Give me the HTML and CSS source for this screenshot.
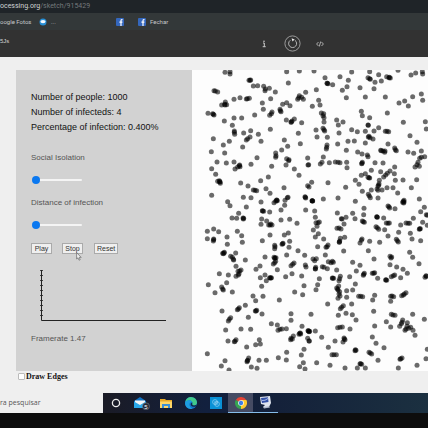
FILE: index.html
```html
<!DOCTYPE html>
<html lang="en">
<head>
<meta charset="utf-8">
<title>Infection sketch</title>
<link rel="stylesheet" href="styles.css">
</head>
<body>
<div class="address"><span class="host">ocessing.org</span>/sketch/915429</div>
<nav class="bookmarks">
  <a class="photos" href="#">oogle Fotos</a>
  <a class="dots" href="#"><svg width="8" height="8" viewBox="0 0 8 8"><circle cx="4" cy="4" r="3.5" fill="#2790d8"/><ellipse cx="4" cy="3.6" rx="2.6" ry="1.6" fill="#f4faff"/></svg>...</a>
  <a class="fb" href="#" aria-label="Facebook"><svg width="8" height="8" viewBox="0 0 8 8"><rect width="8" height="8" rx="1" fill="#3467bd"/><path d="M6.5 1.7H5.8Q5 1.7 5 2.6V8M3.4 4.2H6.4" fill="none" stroke="#fff" stroke-width="1.2"/></svg></a>
  <a class="fechar" href="#"><svg width="8" height="8" viewBox="0 0 8 8"><rect width="8" height="8" rx="1" fill="#3467bd"/><path d="M6.5 1.7H5.8Q5 1.7 5 2.6V8M3.4 4.2H6.4" fill="none" stroke="#fff" stroke-width="1.2"/></svg>Fechar</a>
</nav>
<header class="toolbar">
  <span class="brand">5Js</span>
  <div class="tools">
    <button aria-label="Info"><svg width="6" height="8" viewBox="0 0 6 8"><path d="M2 3H3.3V6.5M1.7 6.7H4.7" fill="none" stroke="#ccc" stroke-width="1"/><circle cx="3" cy="1.2" r=".8" fill="#ccc"/></svg></button>
    <button aria-label="Restart"><svg width="17" height="17" viewBox="0 0 17 17" fill="none" stroke="#b5b5b5"><circle cx="8.5" cy="8.5" r="7.6" stroke-width=".8"/><path d="M6.3 5.3A4 4 0 1 0 10.8 5.2" stroke-width="1"/><path d="M7.6 3.2 10.6 4.6 8.5 6.6Z" fill="#eee" stroke="none"/></svg></button>
    <button aria-label="Code"><svg width="8" height="6" viewBox="0 0 8 6" fill="none" stroke="#bbb" stroke-width=".9"><path d="M2.5 1 .6 3 2.5 5M5.5 1 7.4 3 5.5 5M4.7 .5 3.3 5.5"/></svg></button>
  </div>
</header>
<main class="page">
  <div class="sketch">
    <section class="panel">
      <p class="stat">Number of people: 1000</p>
      <p class="stat">Number of infecteds: 4</p>
      <p class="stat">Percentage of infection: 0.400%</p>
      <label class="caption social" for="social">Social Isolation</label>
      <input id="social" type="range" min="0" max="100" value="0">
      <label class="caption distance" for="distance">Distance of infection</label>
      <input id="distance" type="range" min="0" max="100" value="0">
      <div class="actions">
        <button>Play</button>
        <span class="stop"><button>Stop</button><svg class="cursor" width="6" height="9" viewBox="0 0 6 9"><path d="M.6 .6V7L2 5.8 3 8.2 4.2 7.7 3.2 5.4H5.2Z" fill="#eee" stroke="#555" stroke-width=".6"/></svg></span>
        <button>Reset</button>
      </div>
      <svg class="chart" width="128" height="53" viewBox="0 0 128 53" fill="none" stroke="#222"><path d="M2.5 1V51.5H127"/><path d="M1 1.5H4M1 6.5H4M1 11.5H4M1 16.5H4M1 21.5H4M1 26.5H4M1 31.5H4M1 36.5H4M1 41.5H4M1 46.5H4" stroke-width=".8"/></svg>
      <p class="caption rate">Framerate 1.47</p>
    </section>
    <svg class="crowd" id="crowd" viewBox="0 0 708 903" preserveAspectRatio="xMinYMin slice"></svg>
  </div>
  <label class="edges"><input type="checkbox">Draw Edges</label>
</main>
<footer class="taskbar">
  <div class="search">ra pesquisar</div>
  <button class="app" aria-label="Cortana"><svg width="10" height="10" viewBox="0 0 10 10"><circle cx="5" cy="5" r="3.6" fill="none" stroke="#eee" stroke-width="1.3"/></svg></button>
  <button class="app" aria-label="Mail"><svg width="18" height="14" viewBox="0 0 18 14"><path d="M2 5 8 1 14 5V12H2Z" fill="#1273c4"/><path d="M3 4.5H13V8L8 10 3 8Z" fill="#f2f4f6"/><path d="M2 5.5 8 9 14 5.5V12H2Z" fill="#28a8ea"/><circle cx="14" cy="10.3" r="3.5" fill="#222936" stroke="#8b929b" stroke-width=".5"/><text x="14" y="12.5" class="count">5</text></svg></button>
  <button class="app" aria-label="Files"><svg width="12" height="11" viewBox="0 0 12 11"><path d="M0 1H5L6 2H12V10H0Z" fill="#e9a927"/><path d="M0 3.5H12V10H0Z" fill="#ffd767"/><path d="M2 10V6H10V10H8V8H4V10Z" fill="#3d91d6"/></svg></button>
  <button class="app" aria-label="Edge"><svg width="12" height="12" viewBox="0 0 12 12"><circle cx="6" cy="6" r="6" fill="#1272c8"/><path d="M.2 5.2C1 1.6 3.3 0 6 0 9.6 0 12 2.8 12 5.4 12 7.5 10.5 8.5 8.8 8.5 7 8.5 7 7.5 7.4 6.8 8 5 5.8 3 3.6 3.4 2 3.6.8 4.4.2 5.2Z" fill="#42c98c"/><path d="M.2 5.2C2 2.5 6 3 7 5 5 4.8 4 6.5 4.6 8.5 5 10 6.2 11.2 7.5 11.8 3 12.8-.6 9.4.2 5.2Z" fill="#1e9de0"/><path d="M7.3 5.5Q6.5 8.4 9 8.6 10.5 8.6 11.6 7.6L11 9.2Q8 10.5 6 8.5 5 6.5 7.3 5.5Z" fill="#102945"/></svg></button>
  <button class="app" aria-label="Remote"><svg width="12" height="12" viewBox="0 0 12 12"><rect width="12" height="12" fill="#0a91d6"/><g fill="none" stroke="#a8dcf6" stroke-width=".6"><circle cx="5" cy="5" r="2.4"/><circle cx="7" cy="7" r="2.4"/><path d="M4 5H8M5 7H8"/></g></svg></button>
  <button class="app active" aria-label="Chrome"><svg width="12" height="12" viewBox="0 0 12 12"><path d="M6 6 .8 3A6 6 0 0 1 11.2 3Z" fill="#e54435"/><path d="M6 6 11.2 3A6 6 0 0 1 6 12Z" fill="#fdc92e"/><path d="M6 6V12A6 6 0 0 1 .8 3Z" fill="#35a452"/><path d="M6 3H11.2L12 6 8.6 7.5Z" fill="#fdc92e"/><circle cx="6" cy="6" r="2.8" fill="#fff"/><circle cx="6" cy="6" r="2.2" fill="#3d7ee6"/></svg></button>
  <button class="app open" aria-label="Computer"><svg width="13" height="13" viewBox="0 0 13 13"><path d="M1 1 11 0 12 7 10 11H4L6 9 2 8Z" fill="#dfe5ef"/><path d="M2 2 9 1.3 9.5 6 3 7Z" fill="#3452a8"/><path d="M3 4.5Q6 5 9 2.5" stroke="#a9bbec" fill="none"/><path d="M4 11 10 10.2 11 11.5 5 12.5Z" fill="#b0bacb"/></svg></button>
</footer>
<script src="crowd.js"></script>
</body>
</html>
```
FILE: styles.css
```css
* { box-sizing: border-box; }
body {
  margin: 0;
  min-height: 100vh;
  background: #0d0d0d;
  font-family: "Liberation Sans", Arial, sans-serif;
  overflow: hidden;
}
p { margin: 0; }
svg { display: block; flex: none; }
a { color: inherit; text-decoration: none; }
button { font-family: inherit; }

.address {
  height: 13px;
  line-height: 13px;
  background: #1f2428;
  color: #74797b;
  font-family: Roboto, sans-serif;
  font-size: 7px;
}
.host { color: #d0d3d4; }

.bookmarks {
  display: flex;
  height: 17px;
  line-height: 17px;
  background: #333839;
  color: #c5c8c9;
  font-family: Roboto, sans-serif;
  font-size: 6px;
}
.bookmarks a { display: flex; align-items: center; gap: 4px; }
.photos { width: 39px; }
.dots { width: 77px; }
.fb { width: 22px; }

.toolbar {
  display: flex;
  justify-content: space-between;
  align-items: center;
  height: 27px;
  background: #323232;
  color: #d0d0d0;
}
.brand { font-size: 6px; line-height: 22px; align-self: flex-start; }
.tools { display: flex; margin-right: 94px; }
.tools button {
  display: flex;
  justify-content: center;
  align-items: center;
  width: 28px;
  height: 20px;
  padding: 0;
  border: 0;
  background: none;
}

.page { height: 336px; padding: 13px 0 0 16px; background: #efefef; }
.sketch { display: flex; height: 301px; }
.panel {
  flex: none;
  display: flex;
  flex-direction: column;
  align-items: flex-start;
  width: 176px;
  padding: 20px 0 0 15px;
  background: #d2d2d2;
}
.stat { font-size: 9px; line-height: 15px; color: #111; }
.caption { font-size: 8px; line-height: 15px; color: #555; }
.social { margin-top: 15px; }
.distance { margin-top: 10px; }
.rate { margin-top: 9px; }

input[type="range"] {
  appearance: none;
  width: 50px;
  height: 10px;
  margin: 10px 0 0 1px;
  background: none;
}
input[type="range"]::-webkit-slider-runnable-track {
  height: 2px;
  border-radius: 1px;
  background: #f4f4f4;
}
input[type="range"]::-webkit-slider-thumb {
  appearance: none;
  width: 8px;
  height: 8px;
  margin-top: -3px;
  border-radius: 50%;
  background: #0a78f0;
}

.actions { display: flex; gap: 10px; margin-top: 13px; }
.actions button {
  display: block;
  height: 11px;
  min-width: 21px;
  padding: 0 2px;
  border: 1px solid #aaa;
  background: #efefef;
  color: #333;
  font-size: 7px;
  line-height: 9px;
}
.stop { position: relative; margin-right: 1px; }
.cursor { position: absolute; left: 14px; top: 9px; }
.chart { margin: 15px 0 0 8px; }

.crowd { flex: 1; min-width: 0; height: 301px; background: #fdfdfd; }
.crowd circle { fill: #000; fill-opacity: .58; }

.edges {
  display: flex;
  align-items: center;
  gap: 1px;
  height: 12px;
  padding-left: 2px;
  color: #111;
  font: bold 8px/12px "Liberation Serif", serif;
}
.edges input {
  appearance: none;
  width: 7px;
  height: 7px;
  margin: 0 0 2px;
  border: 1px solid #bbb;
  border-radius: 1px;
  background: #fff;
}

.taskbar {
  display: flex;
  height: 20px;
  background: linear-gradient(90deg, #1a1b26 25%, #12203e 48%, #14213a 65%, #1b3040);
}
.search {
  width: 103px;
  background: #efefef;
  color: #555;
  font: 7px/20px "Open Sans", sans-serif;
}
.app {
  display: flex;
  align-items: center;
  justify-content: center;
  width: 25px;
  padding: 0;
  border: 0;
  background: none;
}
.active { background: #454b63; border-bottom: 1px solid #86bdea; }
.open { border-bottom: 1px solid #86bdea; }
.count { font: 6px "Liberation Sans", sans-serif; fill: #fff; text-anchor: middle; }
```
FILE: crowd.js
```js
// People are grouped by tile: origin of the tile, then "x,y" pairs inside it.
const tiles = [
  [-6, -31, `105,38 120,36 120,43 290,36 328,34 295,70 177,62 182,61 180,62 72,93 76,94 83,97 190,79 203,78 221,80 238,86 225,93 226,88 256,97 347,98 242,117 132,119 150,114 169,118 172,117 178,116 106,127 95,136 104,134 110,135 105,136 217,130 328,108 326,114 323,119 340,119 335,113 278,134 290,129 300,138 220,149 246,157 239,167 244,162 270,149 273,156 271,153 54,161 68,162 72,166 70,164 194,166 132,175 155,175 103,184 127,197 289,181 313,178 303,188 304,187 306,184 335,189 241,209 133,214 134,224 133,218 161,220 182,213 205,224 180,232 169,241 173,237 213,245 70,237 118,245 100,256 158,262 325,221 283,241 331,252 293,260 275,271 64,276 104,280 257,280 258,288 257,293 201,294 290,297 297,300 353,295`],
  [348, -31, `18,34 131,37 185,36 212,45 270,32 309,46 323,40 343,36 344,43 51,54 96,51 121,62 180,54 185,57 187,59 220,64 201,68 236,51 243,54 247,55 244,53 58,71 60,72 57,71 74,75 117,81 103,92 198,87 156,84 25,90 115,114 172,112 232,112 314,111 340,103 344,122 290,124 273,130 301,139 32,122 36,136 13,140 40,160 47,162 48,174 48,187 45,168 160,155 163,168 185,174 238,160 180,196 181,197 86,181 105,187 91,196 286,188 352,186 355,208 24,211 45,206 50,214 48,210 93,220 131,210 148,216 172,215 198,214 212,204 232,215 242,216 237,215 27,232 58,233 181,232 186,234 195,238 183,230 306,228 327,248 120,245 139,244 172,250 240,253 89,253 57,256 55,268 56,263 115,272 149,277 162,283 178,286 180,291 218,272 225,274 230,278 220,273 231,274 260,265 265,273 262,270 300,277 317,281 340,274 46,292 340,293 350,291 335,296`],
  [-6, 269, `81,7 109,10 132,7 183,14 245,20 288,16 296,3 149,16 143,22 135,28 148,18 150,21 65,27 77,44 313,28 327,47 354,16 235,52 212,63 88,63 83,65 91,71 90,66 89,67 152,70 174,79 190,91 200,93 195,92 228,87 240,101 282,84 353,78 65,107 160,113 183,114 213,127 260,121 252,129 262,123 257,125 260,122 285,122 294,113 292,114 284,137 345,111 347,115 346,113 113,126 120,138 169,142 218,154 221,155 217,153 239,157 273,151 347,151 146,161 126,175 140,176 159,175 160,178 161,176 215,178 230,184 213,194 236,196 240,196 246,196 242,193 273,181 299,179 321,191 52,215 71,208 86,216 52,237 71,238 70,244 71,240 142,215 155,228 111,232 112,254 157,248 240,226 295,220 283,226 217,243 299,245 278,252 276,254 279,251 254,257 254,267 255,261 297,263 98,281 102,280 103,278 100,282 137,280 122,290 127,293 130,299 225,292 252,293 255,295 258,294 254,296 290,286 324,273 344,287`],
  [348, 269, `2,15 37,13 42,8 64,9 82,7 96,9 90,8 116,8 117,24 161,12 163,8 162,11 201,9 225,10 260,22 330,8 334,20 321,22 327,15 190,32 218,36 246,34 238,41 233,46 259,42 227,52 172,42 160,47 180,53 185,55 183,54 142,62 153,74 11,68 3,82 60,69 113,83 214,62 213,72 210,79 212,77 262,62 285,61 326,60 237,84 255,84 310,84 190,91 163,95 207,88 222,91 210,92 181,104 187,114 184,109 210,115 269,100 13,123 14,124 12,123 13,124 46,118 90,115 142,125 334,118 286,125 288,127 287,130 284,128 288,122 240,139 243,141 245,145 261,147 349,143 168,146 338,156 355,165 358,167 20,154 22,173 34,187 24,189 30,189 27,200 16,211 31,222 22,232 88,160 134,161 167,165 114,173 102,178 100,177 141,177 108,193 163,184 169,188 166,186 207,172 208,173 206,171 227,175 235,190 244,190 240,191 278,196 294,190 305,191 300,191 316,176 344,188 337,207 334,209 335,207 358,197 87,206 99,208 93,205 204,201 208,204 212,209 230,210 272,218 307,221 240,229 47,238 97,236 110,233 94,247 95,244 94,248 162,238 156,250 160,242 185,245 215,248 265,239 271,247 268,243 312,238 338,243 29,261 54,263 60,256 57,261 107,274 181,273 52,286 305,278 314,293 246,290 251,292 249,295 15,298 25,297 198,298`],
  [-6, 569, `131,1 166,1 138,20 153,31 144,35 147,42 138,50 149,34 145,46 88,42 115,46 110,69 95,82 98,88 100,91 127,97 55,75 75,99 210,19 198,29 250,13 257,5 254,9 262,30 312,10 303,18 308,14 346,16 348,22 306,42 287,51 335,49 211,54 225,46 229,63 239,54 243,55 240,55 244,54 215,80 342,78 314,97 338,105 189,109 219,110 197,123 268,121 96,154 166,137 148,144 142,150 145,148 196,154 200,152 198,154 216,163 175,173 122,174 115,184 118,179 303,162 303,182 107,211 153,208 182,209 244,192 262,196 264,212 276,208 289,207 270,209 336,200 329,221 332,223 327,224 331,220 354,213 357,215 310,229 303,236 302,240 307,238 353,236 357,244 114,244 138,240 135,245 133,246 208,240 211,253 197,255 170,262 52,282 342,269 290,278 334,286 265,294 289,301 105,303 94,319 117,331 176,295 173,302 171,306 172,303 207,302 229,302 184,322 201,326 340,309 329,321 345,328`],
  [348, 569, `20,3 22,28 23,23 22,27 43,21 58,27 48,23 61,6 69,9 76,8 73,5 134,8 156,17 86,31 145,34 97,50 93,63 95,57 125,51 166,47 169,41 167,44 193,41 200,39 197,41 209,56 246,15 266,22 285,29 333,12 298,41 260,46 250,51 256,48 278,54 234,60 236,62 233,61 354,48 351,53 355,50 34,57 29,75 24,90 73,55 77,56 74,56 142,73 134,91 116,93 92,79 86,85 90,91 95,96 96,109 90,116 93,103 89,88 116,113 59,133 131,133 106,138 97,147 101,143 152,110 164,111 158,110 200,107 194,121 248,110 257,111 252,109 248,125 281,108 289,103 294,99 286,106 197,155 114,161 133,165 91,167 144,181 9,164 250,164 261,167 255,166 314,164 349,179 284,181 282,188 298,189 280,192 275,200 297,200 302,206 308,203 291,212 315,212 294,208 321,227 235,186 248,202 200,199 1,213 5,215 3,216 22,214 89,204 103,202 96,203 126,208 41,233 4,244 81,244 108,235 111,240 105,247 109,238 61,263 72,285 85,285 78,285 193,232 204,251 228,264 142,270 144,272 141,273 183,278 191,283 187,280 210,302 282,295 276,299 278,297 358,269 354,297 26,309 66,317 111,325 148,325 156,312 161,314 158,312 172,325 327,317 271,325`]
];

const crowd = document.getElementById("crowd");
for (const [ox, oy, people] of tiles) {
  for (const person of people.split(" ")) {
    const [x, y] = person.split(",").map(Number);
    const dot = document.createElementNS("http://www.w3.org/2000/svg", "circle");
    dot.setAttribute("cx", x + ox);
    dot.setAttribute("cy", y + oy);
    dot.setAttribute("r", 7.5);
    crowd.appendChild(dot);
  }
}
```
